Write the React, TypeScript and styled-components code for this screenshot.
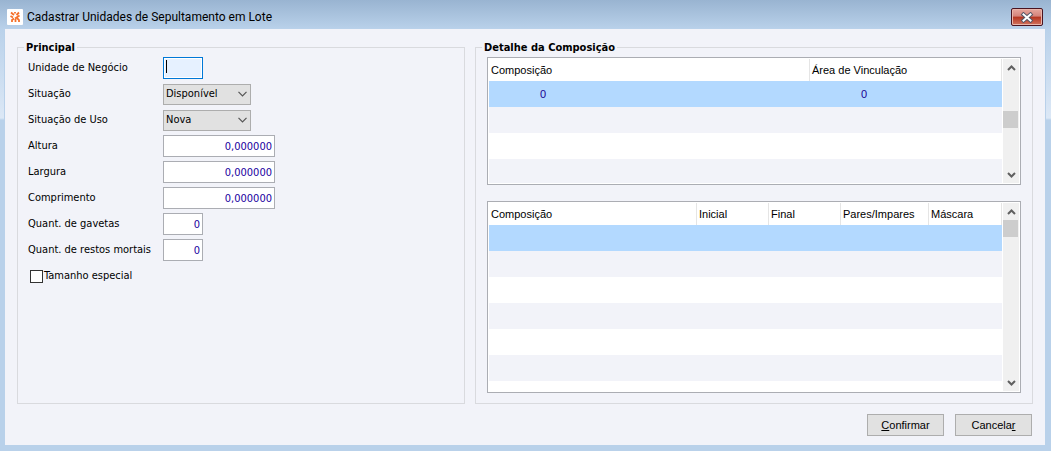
import React from "react";
import styled, { createGlobalStyle } from "styled-components";

const ui = `"DejaVu Sans Condensed", "Noto Sans", sans-serif`;
const grid = `"Liberation Sans", Arial, sans-serif`;

const GlobalStyle = createGlobalStyle`
  *, *::before, *::after { box-sizing: border-box; }
  body { margin: 0; font: 11px/16px ${ui}; color: #000; }
  button, input, select { font: inherit; color: inherit; margin: 0; border-radius: 0; }
`;

const Window = styled.div`
  min-height: 100vh;
  display: flex;
  flex-direction: column;
  padding: 0 6px 6px 5px;
  background:
    linear-gradient(#99b4d1, #b9d1ea 29px, #dce8f6 118px, #b9d1ea 120px) no-repeat,
    #b9d1ea;
`;

const TitleBar = styled.header`
  height: 29px;
  display: flex;
  align-items: center;
  gap: 4px;
  padding: 5px 2px 0 2px;
`;

const AppIcon = styled.svg`
  width: 16px;
  height: 16px;
  flex: none;
`;

const Title = styled.h1`
  flex: 1;
  margin: 0;
  font: 12px/16px Roboto, "Open Sans", sans-serif;
`;

const CloseButton = styled.button`
  width: 32px;
  height: 18px;
  padding: 0;
  display: flex;
  align-items: center;
  justify-content: center;
  border: 1px solid #4a1420;
  border-radius: 2px;
  box-shadow: inset 0 0 0 1px #e9b5aa;
  background: linear-gradient(#e6a79e, #d4837a 45%, #b5341f 50%, #d1745f);
`;

const Content = styled.main`
  flex: 1;
  display: flex;
  flex-direction: column;
  padding: 8px 12px 9px;
  background: #f2f3f9;
  box-shadow: 0 0 0 1px #b9d1ea;
`;

const Panels = styled.div`
  flex: 1;
  display: grid;
  grid-template-columns: 448fr 558fr;
  gap: 10px;
`;

const Group = styled.fieldset`
  min-width: 0;
  margin: 0;
  padding: 0 10px 10px;
  border: 1px solid #d9dade;
`;

const Legend = styled.legend`
  margin-left: -4px;
  padding: 2px 2px 0;
  font-weight: bold;
  line-height: 18px;
`;

const Fields = styled.div`
  display: grid;
  gap: 4px;
`;

const Field = styled.div`
  display: grid;
  grid-template-columns: 135px 1fr;
  align-items: center;
  height: 22px;
`;

const TextInput = styled.input<{ $wide?: boolean }>`
  width: ${(p) => (p.$wide ? 112 : 40)}px;
  height: 22px;
  padding: 0 2px;
  border: 1px solid #abadb3;
  outline: none;
  background: #fff;
  color: #1a00a0;
  text-align: right;
`;

const ActiveBox = styled.div`
  position: relative;
  width: 40px;
  height: 22px;
`;

const ActiveInput = styled(TextInput)`
  border-color: #0078d7;
  background: #e6f1ff;
  box-shadow: inset 0 0 0 1px #fff;
  text-align: left;
`;

const Caret = styled.span`
  position: absolute;
  top: 3px;
  left: 3px;
  width: 1px;
  height: 13px;
  background: #000;
`;

const SelectBox = styled.div`
  display: grid;
  width: 88px;
  align-items: center;
  & > * { grid-area: 1 / 1; }
`;

const Select = styled.select`
  width: 100%;
  height: 21px;
  padding: 0 2px;
  border: 1px solid #adadad;
  background: #e1e1e1;
  appearance: none;
`;

const Chevron = styled.svg`
  width: 9px;
  height: 6px;
  margin-right: 4px;
  justify-self: end;
  pointer-events: none;
`;

const CheckLabel = styled.label`
  display: flex;
  align-items: center;
  gap: 1px;
  height: 22px;
  padding-left: 2px;
`;

const Checkbox = styled.input`
  appearance: none;
  width: 13px;
  height: 13px;
  border: 1px solid #333;
  background: #fff;
`;

const Lists = styled.div`
  display: grid;
  gap: 16px;
  padding: 0 1px;
`;

const ListBox = styled.div<{ $height: number }>`
  display: grid;
  grid-template-columns: 1fr 16px;
  gap: 1px;
  height: ${(p) => p.$height}px;
  padding: 1px;
  border: 1px solid #abadb3;
  background: #fff;
`;

const Viewport = styled.div`
  min-height: 0;
  overflow: hidden;
`;

const Table = styled.table`
  width: 100%;
  table-layout: fixed;
  border-collapse: separate;
  border-spacing: 0;
  font-family: ${grid};
`;

const Head = styled.th`
  height: 22px;
  padding: 0 2px;
  border-right: 1px solid #e5e5e5;
  font-weight: normal;
  text-align: left;
  white-space: nowrap;
`;

const Row = styled.tr`
  height: 26px;
  &:nth-child(even) { background: #f2f3f9; }
  &:first-child { background: #b3d9ff; }
`;

const Cell = styled.td`
  padding: 0 0 0 51px;
  color: #1a0090;
`;

const Scrollbar = styled.div`
  display: flex;
  flex-direction: column;
  min-height: 0;
  background: #f0f0f0;
`;

const ArrowButton = styled.button`
  height: 17px;
  flex: none;
  display: flex;
  align-items: center;
  justify-content: center;
  padding: 0;
  border: 0;
  background: none;
`;

const Track = styled.div<{ $offset: number }>`
  flex: 1;
  padding: ${(p) => p.$offset}px 1px 0 0;
`;

const Thumb = styled.div`
  height: 17px;
  background: #cdcdcd;
`;

const Actions = styled.footer`
  display: flex;
  justify-content: flex-end;
  gap: 11px;
  padding: 10px 1px 0 0;
`;

const ActionButton = styled.button`
  min-width: 77px;
  height: 22px;
  padding: 0 8px;
  border: 1px solid #adadad;
  background: #e1e1e1;
  font-family: ${grid};
`;

const Arrow = ({ down }: { down?: boolean }) => (
  <svg width="9" height="6" viewBox="0 0 9 6" aria-hidden="true">
    <path d={down ? "M1 1 4.500 4.500 8 1" : "M1 5 4.500 1.500 8 5"} fill="none" stroke="#606060" strokeWidth="2" />
  </svg>
);

type Column = { label: string; width?: number };

function List({ columns, rows, height, offset }: { columns: Column[]; rows: string[][]; height: number; offset: number }) {
  return (
    <ListBox $height={height}>
      <Viewport>
        <Table>
          <colgroup>
            {columns.map((c) => (
              <col key={c.label} width={c.width} />
            ))}
          </colgroup>
          <thead>
            <tr>
              {columns.map((c) => (
                <Head key={c.label} scope="col">{c.label}</Head>
              ))}
            </tr>
          </thead>
          <tbody>
            {rows.map((r, i) => (
              <Row key={i}>
                {columns.map((c, j) => (
                  <Cell key={c.label}>{r[j]}</Cell>
                ))}
              </Row>
            ))}
          </tbody>
        </Table>
      </Viewport>
      <Scrollbar>
        <ArrowButton type="button" aria-label="Rolar para cima"><Arrow /></ArrowButton>
        <Track $offset={offset}><Thumb /></Track>
        <ArrowButton type="button" aria-label="Rolar para baixo"><Arrow down /></ArrowButton>
      </Scrollbar>
    </ListBox>
  );
}

function Choice({ id, label, options }: { id: string; label: string; options: string[] }) {
  return (
    <Field>
      <label htmlFor={id}>{label}</label>
      <SelectBox>
        <Select id={id}>
          {options.map((o) => (
            <option key={o}>{o}</option>
          ))}
        </Select>
        <Chevron viewBox="0 0 9 6" aria-hidden="true">
          <path d="M.5.8 4.500 4.800 8.500.8" fill="none" stroke="#555" strokeWidth="1.200" />
        </Chevron>
      </SelectBox>
    </Field>
  );
}

const numbers = [
  { id: "altura", label: "Altura", value: "0,000000", wide: true },
  { id: "largura", label: "Largura", value: "0,000000", wide: true },
  { id: "comprimento", label: "Comprimento", value: "0,000000", wide: true },
  { id: "gavetas", label: "Quant. de gavetas", value: "0" },
  { id: "restos", label: "Quant. de restos mortais", value: "0" },
];

const linkColumns: Column[] = [{ label: "Composição" }, { label: "Área de Vinculação", width: 192 }];
const rangeColumns: Column[] = [
  { label: "Composição" },
  { label: "Inicial", width: 72 },
  { label: "Final", width: 72 },
  { label: "Pares/Impares", width: 88 },
  { label: "Máscara", width: 73 },
];

export default function App() {
  return (
    <Window>
      <GlobalStyle />
      <TitleBar>
        <AppIcon viewBox="0 0 16 16" aria-hidden="true">
          <rect width="16" height="16" rx="1" fill="#fff" />
          <path
            d="M4 3.500 7 6M12 3.500 9.500 6M8 3v1.500M3.500 7 6 8.500M12.500 6.500 8 9.500M5 13V11l2-1.500M8.500 13V10M12 13V11L10 9"
            fill="none"
            stroke="#f5702a"
            strokeWidth="1.800"
          />
        </AppIcon>
        <Title>Cadastrar Unidades de Sepultamento em Lote</Title>
        <CloseButton type="button" aria-label="Fechar">
          <svg width="14" height="11" viewBox="0 0 14 11" aria-hidden="true">
            <g strokeLinecap="square">
              <path d="M3.500 2.500 10.500 8.500M10.500 2.500 3.500 8.500" stroke="#535666" strokeWidth="4" />
              <path d="M3.500 2.500 10.500 8.500M10.500 2.500 3.500 8.500" stroke="#fff" strokeWidth="2" />
            </g>
          </svg>
        </CloseButton>
      </TitleBar>
      <Content>
        <Panels>
          <Group>
            <Legend>Principal</Legend>
            <Fields>
              <Field>
                <label htmlFor="unidade">Unidade de Negócio</label>
                <ActiveBox>
                  <ActiveInput id="unidade" type="text" />
                  <Caret />
                </ActiveBox>
              </Field>
              <Choice id="situacao" label="Situação" options={["Disponível"]} />
              <Choice id="uso" label="Situação de Uso" options={["Nova"]} />
              {numbers.map((n) => (
                <Field key={n.id}>
                  <label htmlFor={n.id}>{n.label}</label>
                  <TextInput id={n.id} type="text" $wide={n.wide} defaultValue={n.value} />
                </Field>
              ))}
              <CheckLabel>
                <Checkbox type="checkbox" />
                Tamanho especial
              </CheckLabel>
            </Fields>
          </Group>
          <Group>
            <Legend>Detalhe da Composição</Legend>
            <Lists>
              <List columns={linkColumns} rows={[["0", "0"], [], [], []]} height={128} offset={35} />
              <List columns={rangeColumns} rows={[[], [], [], [], [], [], []]} height={192} offset={0} />
            </Lists>
          </Group>
        </Panels>
        <Actions>
          <ActionButton type="button"><u>C</u>onfirmar</ActionButton>
          <ActionButton type="button">Cancela<u>r</u></ActionButton>
        </Actions>
      </Content>
    </Window>
  );
}
